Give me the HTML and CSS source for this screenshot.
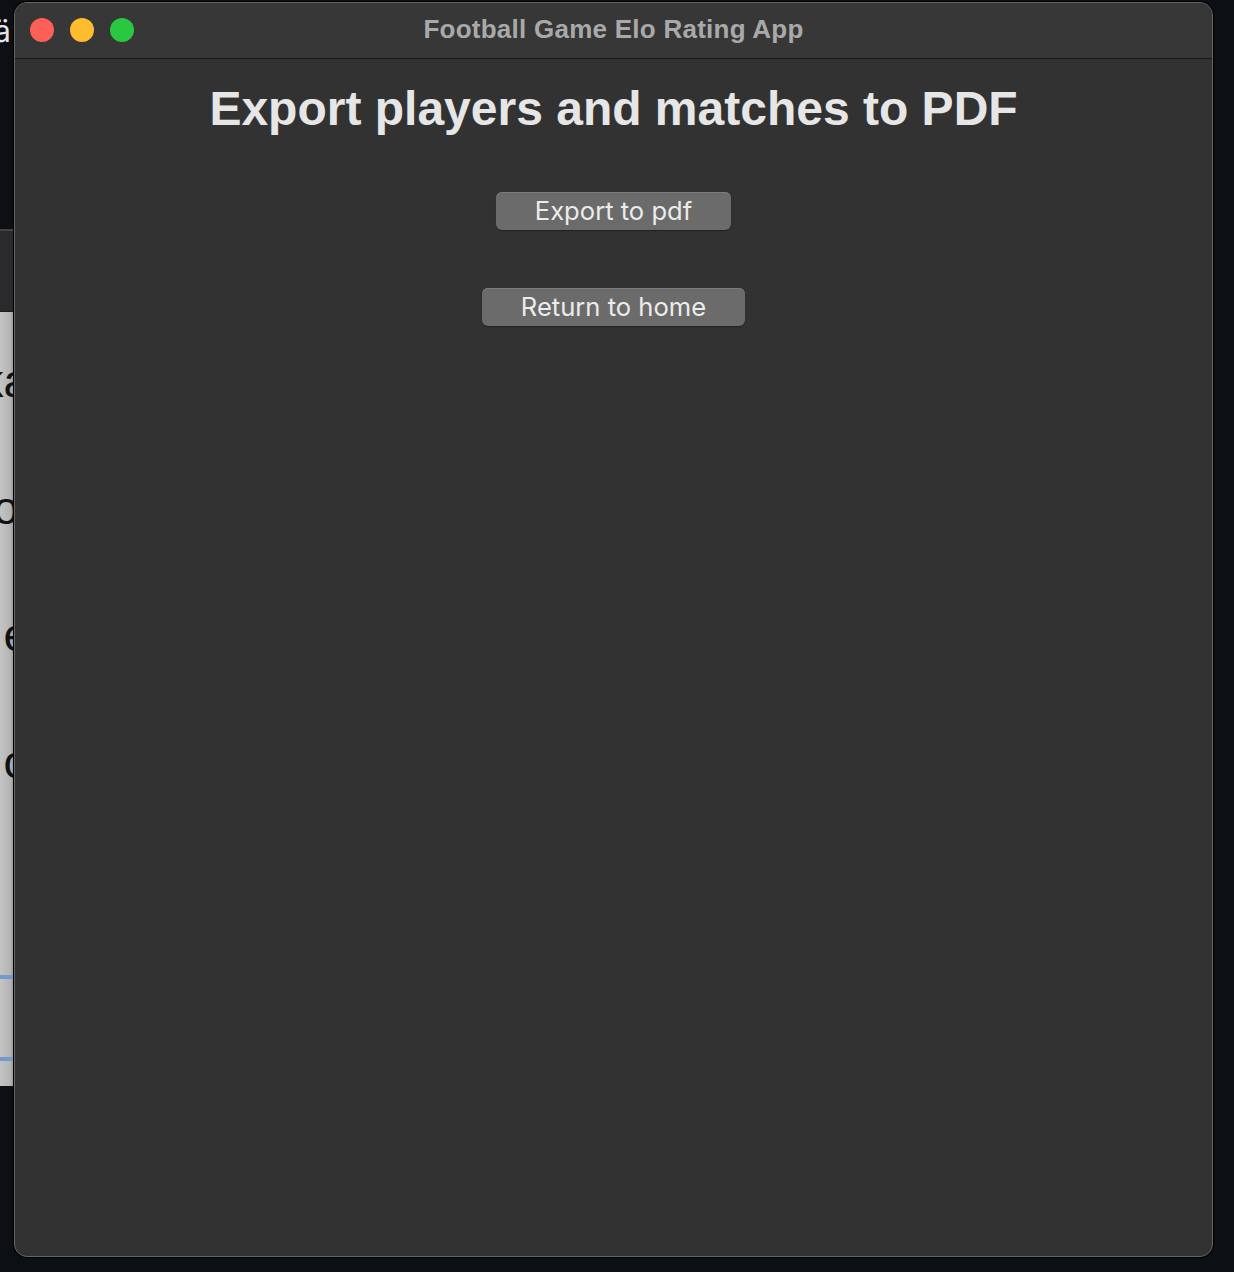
FILE: index.html
```html
<!DOCTYPE html>
<html>
<head>
<meta charset="utf-8">
<title>Football Game Elo Rating App</title>
<link rel="stylesheet" href="styles.css">
</head>
<body>
<div class="desktop">
  <div class="desk-label">ä</div>
  <div class="bgwin">
    <div class="bgwin-bar"></div>
    <div class="bgwin-body">
      <div class="bg-row bg-row-first"><span class="bg-glyph">ka</span></div>
      <div class="bg-row"><span class="bg-glyph">ol</span></div>
      <div class="bg-row"><span class="bg-glyph">e</span></div>
      <div class="bg-row"><span class="bg-glyph">o</span></div>
      <div class="bg-line bg-line-1"></div>
      <div class="bg-line bg-line-2"></div>
    </div>
  </div>

  <div class="window">
    <div class="titlebar">
      <div class="lights">
        <span class="light red"></span>
        <span class="light yellow"></span>
        <span class="light green"></span>
      </div>
      <div class="title">Football Game Elo Rating App</div>
    </div>
    <div class="content">
      <h1 class="heading">Export players and matches to PDF</h1>
      <button class="btn btn-export">Export to pdf</button>
      <button class="btn btn-home">Return to home</button>
    </div>
  </div>
</div>
</body>
</html>
```

FILE: styles.css
```css
html, body {
  margin: 0;
  padding: 0;
}
body {
  width: 1234px;
  height: 1272px;
  overflow: hidden;
  background: #0c0f14;
  font-family: "Liberation Sans", Arial, sans-serif;
}
.desktop {
  position: relative;
  width: 1234px;
  height: 1272px;
}
.desk-label {
  position: absolute;
  left: -6px;
  top: 13px;
  color: #e6e6e6;
  font-family: "Inter", "Liberation Sans", sans-serif;
  font-size: 30px;
  line-height: 36px;
}
.bgwin {
  position: absolute;
  left: 0;
  top: 229px;
  width: 13px;
  height: 857px;
  overflow: hidden;
  border-right: 1px solid #1a1a1a;
  display: flex;
  flex-direction: column;
}
.bgwin-bar {
  height: 80px;
  background: #2a2a2c;
  border-top: 2px solid #444446;
  border-bottom: 1px solid #1c1c1e;
}
.bgwin-body {
  position: relative;
  flex: 1;
  background: linear-gradient(to right, #c4c4c4, #b4b4b4 80%, #9a9a9a);
  display: flex;
  flex-direction: column;
}
.bg-row {
  height: 127px;
  position: relative;
}
.bg-row-first {
  margin-top: 44px;
}
.bg-glyph {
  position: absolute;
  right: -16px;
  top: 0;
  color: #111;
  font-family: "Liberation Sans", Arial, sans-serif;
  font-size: 46px;
  line-height: 50px;
  white-space: nowrap;
}
.bg-line {
  position: absolute;
  left: 0;
  right: 0;
  height: 4px;
  background: #7499cc;
}
.bg-line-1 { top: 663px; }
.bg-line-2 { top: 745px; }

.window {
  position: absolute;
  left: 14px;
  top: 2px;
  width: 1199px;
  height: 1255px;
  box-sizing: border-box;
  border: 1px solid #666666;
  border-radius: 13px;
  background: #323232;
  overflow: hidden;
  display: flex;
  flex-direction: column;
  box-shadow: 0 0 0 1px #000;
}
.titlebar {
  position: relative;
  height: 55px;
  flex: none;
  background: #373737;
  border-bottom: 1px solid #161616;
  display: flex;
  justify-content: center;
}
.lights {
  position: absolute;
  left: 15px;
  top: 15px;
  display: flex;
  gap: 16px;
}
.light {
  width: 24px;
  height: 24px;
  border-radius: 50%;
  display: block;
}
.red { background: #fe5f57; }
.yellow { background: #febc2e; }
.green { background: #28c840; }
.title {
  padding-top: 11px;
  line-height: 30px;
  font-size: 26px;
  font-weight: bold;
  letter-spacing: 0.25px;
  color: #a9a9a9;
  font-family: "Liberation Sans", Arial, sans-serif;
}
.content {
  flex: 1;
  display: flex;
  flex-direction: column;
  align-items: center;
}
.heading {
  margin: 22px 0 0;
  font-size: 48px;
  line-height: 56px;
  font-weight: bold;
  color: #e6e6e6;
  font-family: "Liberation Sans", Arial, sans-serif;
}
.btn {
  height: 38px;
  padding: 0 39px;
  border: none;
  border-radius: 6px;
  background: #6b6b6b;
  box-shadow: inset 0 1px 0 #7c7c7c, 0 1px 1px rgba(0,0,0,0.35);
  color: #ececec;
  font-family: "Inter", "Liberation Sans", sans-serif;
  font-size: 25.6px;
  line-height: 38px;
}
.btn-export {
  margin-top: 55px;
}
.btn-home {
  margin-top: 58px;
}
```
